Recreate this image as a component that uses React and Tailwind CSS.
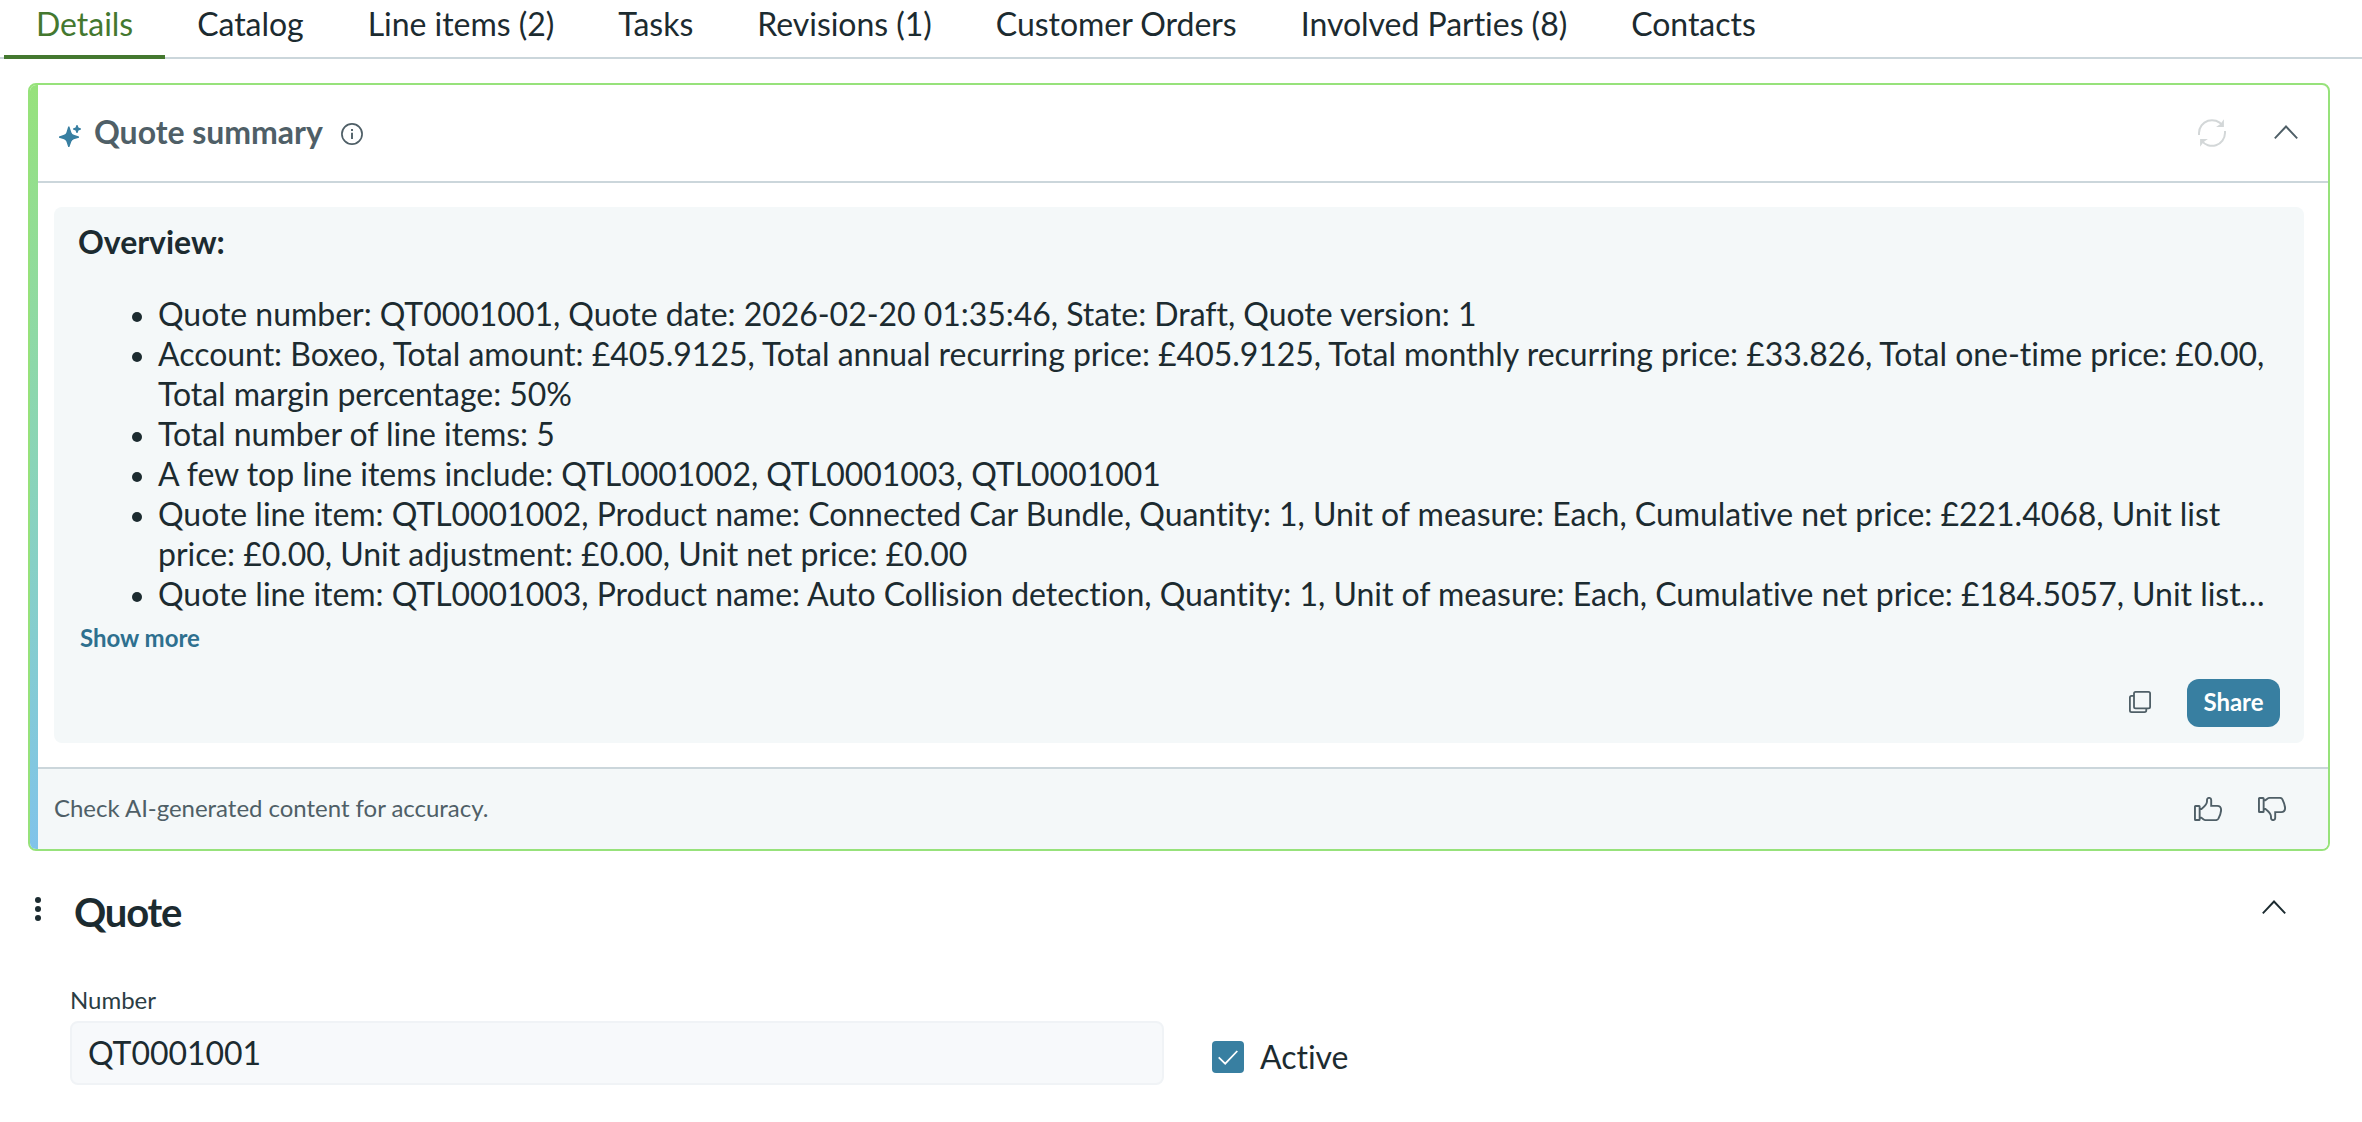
const tabs = [
  'Details',
  'Catalog',
  'Line items (2)',
  'Tasks',
  'Revisions (1)',
  'Customer Orders',
  'Involved Parties (8)',
  'Contacts',
]

const overview = [
  'Quote number: QT0001001, Quote date: 2026-02-20 01:35:46, State: Draft, Quote version: 1',
  'Account: Boxeo, Total amount: £405.9125, Total annual recurring price: £405.9125, Total monthly recurring price: £33.826, Total one-time price: £0.00, Total margin percentage: 50%',
  'Total number of line items: 5',
  'A few top line items include: QTL0001002, QTL0001003, QTL0001001',
  'Quote line item: QTL0001002, Product name: Connected Car Bundle, Quantity: 1, Unit of measure: Each, Cumulative net price: £221.4068, Unit list price: £0.00, Unit adjustment: £0.00, Unit net price: £0.00',
  'Quote line item: QTL0001003, Product name: Auto Collision detection, Quantity: 1, Unit of measure: Each, Cumulative net price: £184.5057, Unit list…',
]

function SparkleIcon() {
  return (
    <svg width="22" height="22" viewBox="0 0 22 22" fill="#387fa1">
      <path d="M9.2 1.6H10.4L12.4 7.4Q13 9.2 14.8 9.8L20 11.5V12.7L14.8 14.2Q13 14.8 12.4 16.6L10.4 22H9.2L7.4 16.6Q6.8 14.8 5 14.2L0 12.7V11.5L5 9.8Q6.8 9.2 7.4 7.4Z" />
      <path d="M17.5 0H18.5L19.5 2.5L22 3.5V4.5L19.5 5.5L18.5 8H17.5L16.5 5.5L14 4.5V3.5L16.5 2.5Z" />
    </svg>
  )
}

function InfoIcon() {
  return (
    <svg width="22" height="22" viewBox="0 0 22 22" fill="none" stroke="#4f5f67">
      <circle cx="11" cy="11" r="10.1" strokeWidth="1.7" />
      <path d="M11 9.8V16" strokeWidth="1.9" />
      <path d="M11 6V8" strokeWidth="1.9" />
    </svg>
  )
}

function RefreshIcon() {
  return (
    <svg width="28" height="28" viewBox="0 0 28 28" fill="none" stroke="#d3d7d8" strokeWidth="2">
      <path d="M1 16V14A13 13 0 0 1 24.5 6.5" />
      <path d="M25.2 2.4V7.2H20.4L22.8 5.6Z" fill="#d3d7d8" strokeWidth="1.4" />
      <path d="M27 12V14A13 13 0 0 1 3.5 21.5" />
      <path d="M2.8 25.6V20.8H7.6L5.2 22.4Z" fill="#d3d7d8" strokeWidth="1.4" />
    </svg>
  )
}

function ChevronUp({ color }) {
  return (
    <svg width="24" height="14" viewBox="0 0 24 14" fill="none" stroke={color} strokeWidth="1.9">
      <path d="M0.8 13.3L12 1.5L23.2 13.3" />
    </svg>
  )
}

function CopyIcon() {
  return (
    <svg width="22" height="22" viewBox="0 0 22 22" fill="none" stroke="#4f5f67" strokeWidth="1.8">
      <rect x="5" y="0.9" width="16.1" height="16.4" rx="1.6" />
      <path d="M5 4.9H2.5Q0.9 4.9 0.9 6.5V19.5Q0.9 21.1 2.5 21.1H15.5Q17.3 21.1 17.3 19.3V17.3" />
    </svg>
  )
}

function ThumbIcon({ className }) {
  return (
    <svg className={className} width="28" height="24" viewBox="0 0 28 24" fill="none" stroke="#4f5f67" strokeWidth="1.9">
      <rect x="0.95" y="8.95" width="4.7" height="14.1" rx="0.6" />
      <path d="M5.7 12H7.5C10.5 9.6 13 7.5 13 4.5V3C13 0.2 17.2 0.2 17.2 3V8.9H23.2C25.6 9 27.1 10.6 27.1 13C27.1 16 25.6 19.2 24.4 21.6C23.8 22.7 23 23.1 21.8 23.1H11.6C9.6 23.1 8.6 21.3 7.2 20.7H5.7" />
    </svg>
  )
}

export default function App() {
  return (
    <div className="h-[1122px] overflow-hidden bg-white font-['Lato',sans-serif] text-[32px] leading-10 tracking-[-0.03px] text-[#1c2b30] [font-variant-ligatures:none]">
      {/* Tabs */}
      <nav className="flex h-[59px] border-b-2 border-[#cbd6db] pl-1">
        {tabs.map((tab, i) => (
          <button
            key={tab}
            className={`h-[59px] shrink-0 px-8 pt-1 pb-[11px] whitespace-nowrap ${
              i === 0 ? 'border-b-4 border-[#44782f] text-[#44782f]' : 'border-b-4 border-transparent'
            }`}
          >
            {tab}
          </button>
        ))}
      </nav>

      {/* Quote summary */}
      <section className="mt-6 mr-8 ml-7 flex h-[768px] overflow-hidden rounded-lg border-2 border-[#97e27b]">
        <div className="w-2 shrink-0 bg-linear-to-b from-[#97e27b] to-[#80c3ea]" />
        <div className="flex min-w-0 flex-1 flex-col">
          <header className="flex h-[98px] shrink-0 items-center border-b-2 border-[#cbd6db] pr-[30px] pl-[21px]">
            <div className="mt-1.5">
              <SparkleIcon />
            </div>
            <h2 className="-mt-0.5 ml-[13px] font-bold text-[#4f5f67]">Quote summary</h2>
            <div className="ml-[18px] mt-0.5">
              <InfoIcon />
            </div>
            <div className="ml-auto flex items-center gap-12">
              <RefreshIcon />
              <div className="-mt-0.5">
                <ChevronUp color="#4f5f67" />
              </div>
            </div>
          </header>

          <div className="flex flex-1 flex-col py-6 pr-6 pl-4">
            <div className="flex flex-1 flex-col rounded-lg bg-[#f4f8f9] px-6 pt-[15px] pb-4">
              <p className="font-bold">Overview:</p>
              <ul className="mt-8 pl-[54px]">
                {overview.map((line) => (
                  <li key={line} className="flex gap-4">
                    <span className="mt-[18px] size-2.5 shrink-0 rounded-full bg-[#1c2b30]" />
                    <span>{line}</span>
                  </li>
                ))}
              </ul>
              <button className="mt-2 self-start pl-0.5 text-2xl font-bold text-[#2e708f]">Show more</button>
              <div className="mt-auto flex items-center justify-end gap-9">
                <div className="-mt-0.5">
                  <CopyIcon />
                </div>
                <button className="h-12 w-[93px] rounded-xl bg-[#387fa1] pb-0.5 text-2xl font-bold text-white">Share</button>
              </div>
            </div>
          </div>

          <footer className="flex h-[82px] shrink-0 items-center border-t-2 border-[#cbd6db] bg-[#f4f8f9] pr-[42px] pl-4">
            <span className="-mt-0.5 text-2xl text-[#4f5f67]">Check AI-generated content for accuracy.</span>
            <div className="ml-auto flex gap-9">
              <ThumbIcon />
              <ThumbIcon className="-scale-y-100" />
            </div>
          </footer>
        </div>
      </section>

      {/* Quote form */}
      <section className="pt-9">
        <div className="flex h-[50px] items-center pr-[76px] pl-[35px]">
          <svg width="6" height="24" viewBox="0 0 6 24" fill="#1c2b30" className="-mt-1.5">
            <circle cx="3" cy="3" r="3" />
            <circle cx="3" cy="12" r="3" />
            <circle cx="3" cy="21" r="3" />
          </svg>
          <h2 className="ml-[33px] text-[40px] font-bold tracking-[-1.2px]">Quote</h2>
          <div className="-mt-2.5 ml-auto">
            <ChevronUp color="#1c2b30" />
          </div>
        </div>

        <div className="mt-[46px] flex pl-[70px]">
          <div className="w-[1094px]">
            <label className="block h-[38px] text-2xl leading-[34px] text-[#2b3d44]">Number</label>
            <div className="flex h-16 items-center rounded-lg border-2 border-[#f0f3f6] bg-[#f7f9fb] px-4">QT0001001</div>
          </div>
          <div className="mt-[46px] ml-12 flex items-center gap-4">
            <div className="flex size-8 items-center justify-center rounded bg-[#387fa1]">
              <svg width="20" height="15" viewBox="0 0 20 15" fill="none" stroke="white" strokeWidth="1.8">
                <path d="M0.7 7.3L7.2 13.6L19.3 1" />
              </svg>
            </div>
            <span>Active</span>
          </div>
        </div>
      </section>
    </div>
  )
}
